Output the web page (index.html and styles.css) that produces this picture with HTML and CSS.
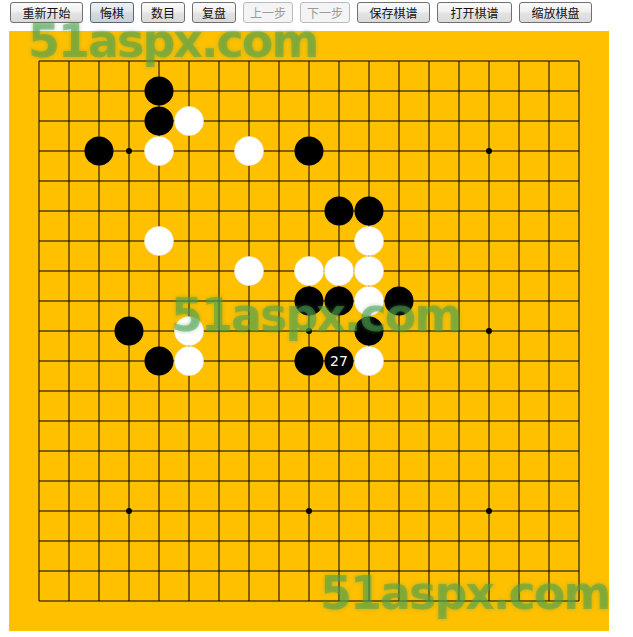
FILE: index.html
```html
<!DOCTYPE html>
<html lang="zh-CN">
<head>
<meta charset="utf-8">
<title>五子棋</title>
<link rel="stylesheet" href="styles.css">
</head>
<body>
<div class="page">
  <div class="toolbar">
    <button class="btn w4">重新开始</button>
    <button class="btn w2 hover">悔棋</button>
    <button class="btn w2">数目</button>
    <button class="btn w2">复盘</button>
    <button class="btn w3" disabled>上一步</button>
    <button class="btn w3" disabled>下一步</button>
    <button class="btn w4">保存棋谱</button>
    <button class="btn w4 wide">打开棋谱</button>
    <button class="btn w4">缩放棋盘</button>
  </div>
  <div class="board">
    <svg class="board-svg" width="600" height="600" viewBox="0 0 600 600" xmlns="http://www.w3.org/2000/svg">
      <g class="grid" id="grid"></g>
      <g class="stars">
        <circle cx="120" cy="120" r="3"/><circle cx="300" cy="120" r="3"/><circle cx="480" cy="120" r="3"/>
        <circle cx="120" cy="300" r="3"/><circle cx="300" cy="300" r="3"/><circle cx="480" cy="300" r="3"/>
        <circle cx="120" cy="480" r="3"/><circle cx="300" cy="480" r="3"/><circle cx="480" cy="480" r="3"/>
      </g>
      <g id="stones"></g>
      <text class="num" x="330" y="334.5" text-anchor="middle">27</text>
    </svg>
  </div>
  <div class="wm wm-top">51aspx.com</div>
  <div class="wm wm-mid">51aspx.com</div>
  <div class="wm wm-bot">51aspx.com</div>
</div>
<script src="app.js"></script>
</body>
</html>
```
FILE: styles.css
```css
html, body {
  margin: 0;
  padding: 0;
  background: #ffffff;
}
.page {
  position: relative;
  width: 633px;
  height: 637px;
  overflow: hidden;
  font-family: "Noto Sans CJK SC", "DejaVu Sans", sans-serif;
}
.toolbar {
  display: flex;
  gap: 7px;
  padding: 2px 0 0 10px;
  height: 21px;
}
.btn {
  height: 21px;
  padding: 0;
  margin: 0;
  border: 1px solid #707070;
  border-radius: 3px;
  background: linear-gradient(#fbfbfb 0%, #f0f0f0 45%, #e3e3e3 55%, #dadada 100%);
  font-family: "Noto Sans CJK SC", sans-serif;
  font-size: 12px;
  line-height: 19px;
  color: #111;
  box-sizing: border-box;
}
.btn.w2 { width: 44px; }
.btn.w3 { width: 50px; }
.btn.w4 { width: 73px; }
.btn.wide { width: 75px; }
.btn.hover {
  border-color: #5b6670;
  background: linear-gradient(#eef1f4 0%, #e0e5ea 45%, #d2d9df 55%, #c9d1d8 100%);
}
.btn:disabled {
  border-color: #b8bcc0;
  background: #f4f4f4;
  color: #9a9a9a;
}
.board {
  margin: 8px 0 0 9px;
  width: 600px;
  height: 600px;
}
.board-svg {
  display: block;
  background: #ffc000;
}
.grid line {
  stroke: #000;
  stroke-width: 1;
}
.stars circle { fill: #000; }
.black { fill: #000; }
.white { fill: #fff; stroke: #f0f0f0; stroke-width: 0.5; }
.num {
  fill: #fff;
  font-family: "DejaVu Sans", sans-serif;
  font-size: 14px;
}
.wm {
  position: absolute;
  font-family: "DejaVu Sans", sans-serif;
  font-weight: bold;
  font-size: 46px;
  line-height: 30px;
  letter-spacing: -2px;
  white-space: nowrap;
  color: rgba(75, 160, 80, 0.5);
  text-shadow: 0 0 4px rgba(75, 160, 80, 0.45);
  filter: blur(0.7px);
  pointer-events: none;
}
.wm-top { left: 28px; top: 26px; }
.wm-mid { left: 171px; top: 300px; }
.wm-bot { left: 320px; top: 578px; }
```
FILE: app.js
```js
(function () {
  var NS = "http://www.w3.org/2000/svg";
  var grid = document.getElementById("grid");
  for (var i = 0; i < 19; i++) {
    var p = 30 + i * 30;
    var h = document.createElementNS(NS, "line");
    h.setAttribute("x1", 30); h.setAttribute("x2", 570);
    h.setAttribute("y1", p); h.setAttribute("y2", p);
    grid.appendChild(h);
    var v = document.createElementNS(NS, "line");
    v.setAttribute("y1", 30); v.setAttribute("y2", 570);
    v.setAttribute("x1", p); v.setAttribute("x2", p);
    grid.appendChild(v);
  }
  var black = [[4,1],[4,2],[2,3],[9,3],[10,5],[11,5],[9,8],[10,8],[12,8],[11,9],[3,9],[4,10],[9,10],[10,10]];
  var white = [[5,2],[4,3],[7,3],[11,6],[4,6],[7,7],[9,7],[10,7],[11,7],[11,8],[5,9],[5,10],[11,10]];
  var stones = document.getElementById("stones");
  function add(list, cls) {
    list.forEach(function (s) {
      var c = document.createElementNS(NS, "circle");
      c.setAttribute("cx", 30 + s[0] * 30);
      c.setAttribute("cy", 30 + s[1] * 30);
      c.setAttribute("r", 14.5);
      c.setAttribute("class", cls);
      stones.appendChild(c);
    });
  }
  add(black, "black");
  add(white, "white");
})();
```
